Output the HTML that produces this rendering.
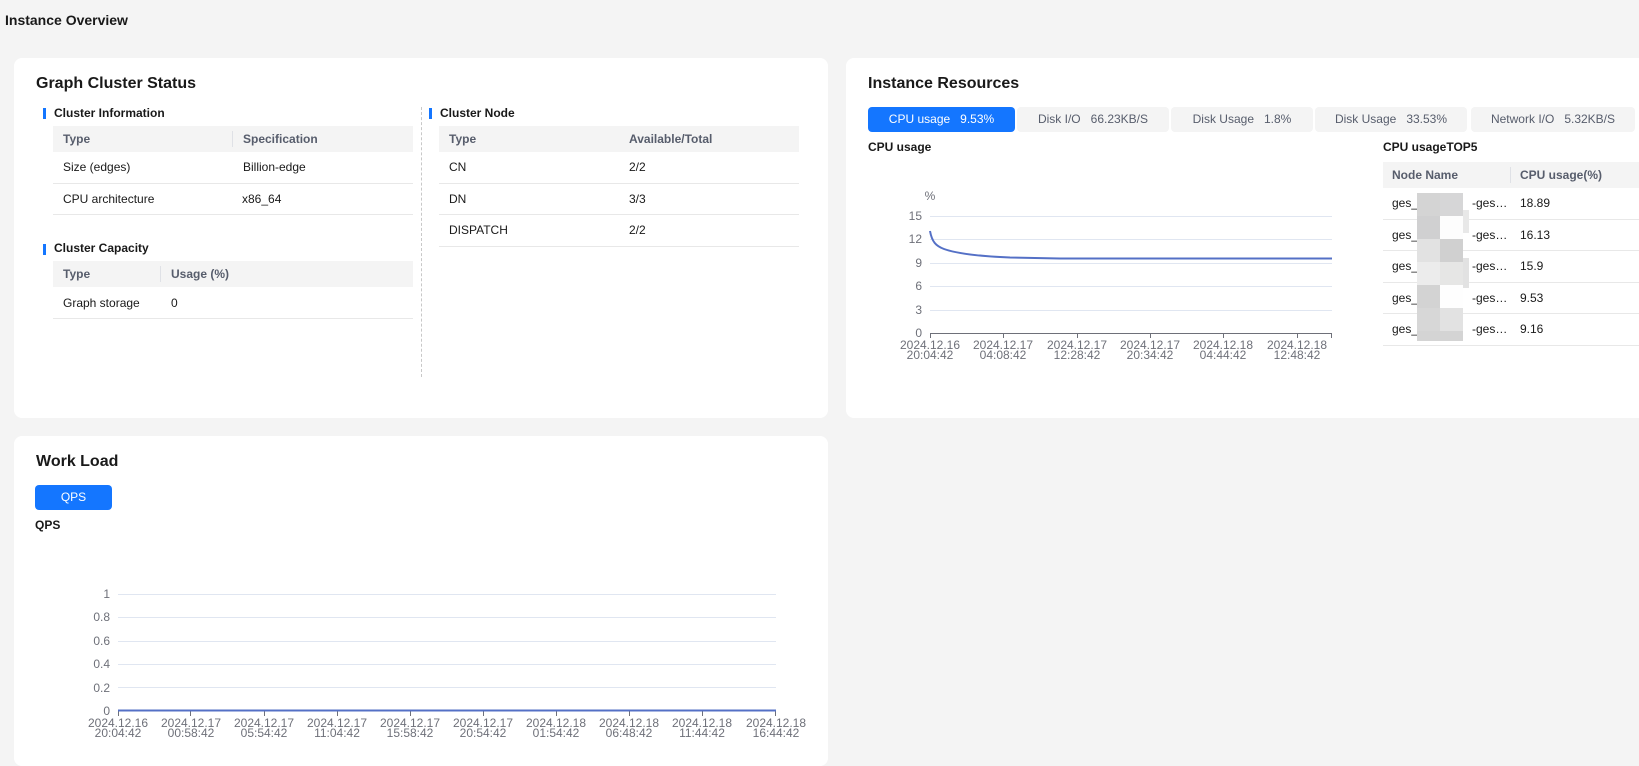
<!DOCTYPE html>
<html><head><meta charset="utf-8"><style>
*{margin:0;padding:0;box-sizing:border-box}
body{width:1639px;height:748px;background:#f4f4f4;font-family:"Liberation Sans",Arial,sans-serif;color:#191919;position:relative;overflow:hidden;font-size:12px}
.a{position:absolute;white-space:nowrap}
.card{position:absolute;background:#fff;border-radius:8px}
.h1{font-size:16px;font-weight:bold;line-height:20px}
.h2{font-size:12px;font-weight:bold;line-height:14px}
.bar{position:absolute;width:3px;height:11px;background:#1476ff}
.th{position:absolute;background:#f4f4f4;height:26px}
.th span{position:absolute;top:6px;color:#575d6c;font-weight:bold;line-height:14px}
.sep{position:absolute;width:1px;height:16px;top:5px;background:#dfe1e6}
.ln{position:absolute;height:1px;background:#e8e8e8}
.t{position:absolute;line-height:14px;white-space:nowrap}
.tab{position:absolute;top:107px;height:25px;background:#f4f4f4;border-radius:4px;text-align:center;line-height:25px;color:#575d6c}
svg text{font-family:"Liberation Sans",Arial,sans-serif;font-size:12px;fill:#6e7079}
</style></head><body>
<div class="a" style="left:5px;top:11px;font-size:14px;font-weight:bold;line-height:18px">Instance Overview</div>

<div class="card" style="left:14px;top:58px;width:814px;height:360px"></div>
<div class="card" style="left:846px;top:58px;width:800px;height:360px"></div>
<div class="card" style="left:14px;top:436px;width:814px;height:330px"></div>

<!-- Graph Cluster Status -->
<div class="a h1" style="left:36px;top:74px">Graph Cluster Status</div>
<div class="bar" style="left:43px;top:108px"></div>
<div class="a h2" style="left:54px;top:106px">Cluster Information</div>
<div class="th" style="left:53px;top:126px;width:360px"><span style="left:10px">Type</span><div class="sep" style="left:179px"></div><span style="left:190px">Specification</span></div>
<div class="t" style="left:63px;top:160px">Size (edges)</div><div class="t" style="left:243px;top:160px">Billion-edge</div>
<div class="ln" style="left:53px;top:183px;width:360px"></div>
<div class="t" style="left:63px;top:192px">CPU architecture</div><div class="t" style="left:242px;top:192px">x86_64</div>
<div class="ln" style="left:53px;top:214px;width:360px"></div>

<div class="bar" style="left:43px;top:244px"></div>
<div class="a h2" style="left:54px;top:241px">Cluster Capacity</div>
<div class="th" style="left:53px;top:261px;width:360px"><span style="left:10px">Type</span><div class="sep" style="left:107px"></div><span style="left:118px">Usage (%)</span></div>
<div class="t" style="left:63px;top:296px">Graph storage</div><div class="t" style="left:171px;top:296px">0</div>
<div class="ln" style="left:53px;top:318px;width:360px"></div>

<div class="a" style="left:421px;top:107px;height:270px;border-left:1px dashed #c8c8c8"></div>

<div class="bar" style="left:429px;top:108px"></div>
<div class="a h2" style="left:440px;top:106px">Cluster Node</div>
<div class="th" style="left:439px;top:126px;width:360px"><span style="left:10px">Type</span><span style="left:190px">Available/Total</span></div>
<div class="t" style="left:449px;top:160px">CN</div><div class="t" style="left:629px;top:160px">2/2</div>
<div class="ln" style="left:439px;top:183px;width:360px"></div>
<div class="t" style="left:449px;top:192px">DN</div><div class="t" style="left:629px;top:192px">3/3</div>
<div class="ln" style="left:439px;top:214px;width:360px"></div>
<div class="t" style="left:449px;top:223px">DISPATCH</div><div class="t" style="left:629px;top:223px">2/2</div>
<div class="ln" style="left:439px;top:246px;width:360px"></div>

<!-- Instance Resources -->
<div class="a h1" style="left:868px;top:74px">Instance Resources</div>
<div class="tab" style="left:868px;width:147px;background:#1476ff;color:#fff">CPU usage&nbsp;&nbsp;&nbsp;9.53%</div>
<div class="tab" style="left:1017px;width:152px">Disk I/O&nbsp;&nbsp;&nbsp;66.23KB/S</div>
<div class="tab" style="left:1171px;width:142px">Disk Usage&nbsp;&nbsp;&nbsp;1.8%</div>
<div class="tab" style="left:1315px;width:152px">Disk Usage&nbsp;&nbsp;&nbsp;33.53%</div>
<div class="tab" style="left:1471px;width:164px">Network I/O&nbsp;&nbsp;&nbsp;5.32KB/S</div>
<div class="a h2" style="left:868px;top:140px">CPU usage</div>
<div class="a h2" style="left:1383px;top:140px">CPU usageTOP5</div>

<svg class="a" style="left:0;top:0" width="1639" height="748">
 <g stroke="#e0e6f1" stroke-width="1">
  <line x1="930" y1="216.5" x2="1332" y2="216.5"/><line x1="930" y1="239.5" x2="1332" y2="239.5"/>
  <line x1="930" y1="263.5" x2="1332" y2="263.5"/><line x1="930" y1="286.5" x2="1332" y2="286.5"/>
  <line x1="930" y1="310.5" x2="1332" y2="310.5"/>
 </g>
 <g stroke="#6e7079" stroke-width="1">
  <line x1="930" y1="333.5" x2="1332" y2="333.5"/>
  <line x1="930.5" y1="333" x2="930.5" y2="338"/><line x1="1003.5" y1="333" x2="1003.5" y2="338"/>
  <line x1="1077.5" y1="333" x2="1077.5" y2="338"/><line x1="1150.5" y1="333" x2="1150.5" y2="338"/>
  <line x1="1223.5" y1="333" x2="1223.5" y2="338"/><line x1="1297.5" y1="333" x2="1297.5" y2="338"/>
  <line x1="1331.5" y1="333" x2="1331.5" y2="338"/>
 </g>
 <path d="M930 231 C932 242 936 246 944 249 C955 253 975 256 1010 257.5 L1060 258.5 L1332 258.5" fill="none" stroke="#5470c6" stroke-width="2"/>
 <text x="930" y="200" text-anchor="middle">%</text>
 <g text-anchor="end"><text x="922" y="220">15</text><text x="922" y="243">12</text><text x="922" y="267">9</text><text x="922" y="290">6</text><text x="922" y="314">3</text><text x="922" y="337">0</text></g>
 <g text-anchor="middle">
  <text x="930" y="349">2024.12.16</text><text x="930" y="359">20:04:42</text>
  <text x="1003" y="349">2024.12.17</text><text x="1003" y="359">04:08:42</text>
  <text x="1077" y="349">2024.12.17</text><text x="1077" y="359">12:28:42</text>
  <text x="1150" y="349">2024.12.17</text><text x="1150" y="359">20:34:42</text>
  <text x="1223" y="349">2024.12.18</text><text x="1223" y="359">04:44:42</text>
  <text x="1297" y="349">2024.12.18</text><text x="1297" y="359">12:48:42</text>
 </g>

 <!-- workload -->
 <g stroke="#e0e6f1" stroke-width="1">
  <line x1="118" y1="594.5" x2="776" y2="594.5"/><line x1="118" y1="617.5" x2="776" y2="617.5"/>
  <line x1="118" y1="641.5" x2="776" y2="641.5"/><line x1="118" y1="664.5" x2="776" y2="664.5"/>
  <line x1="118" y1="687.5" x2="776" y2="687.5"/>
 </g>
 <g stroke="#6e7079" stroke-width="1">
  <line x1="118.5" y1="711" x2="118.5" y2="716"/><line x1="190.5" y1="711" x2="190.5" y2="716"/>
  <line x1="264.5" y1="711" x2="264.5" y2="716"/><line x1="337.5" y1="711" x2="337.5" y2="716"/>
  <line x1="410.5" y1="711" x2="410.5" y2="716"/><line x1="483.5" y1="711" x2="483.5" y2="716"/>
  <line x1="556.5" y1="711" x2="556.5" y2="716"/><line x1="629.5" y1="711" x2="629.5" y2="716"/>
  <line x1="702.5" y1="711" x2="702.5" y2="716"/><line x1="775.5" y1="711" x2="775.5" y2="716"/>
 </g>
 <line x1="118" y1="710.5" x2="776" y2="710.5" stroke="#5470c6" stroke-width="2"/>
 <g text-anchor="end"><text x="110" y="598">1</text><text x="110" y="621">0.8</text><text x="110" y="645">0.6</text><text x="110" y="668">0.4</text><text x="110" y="692">0.2</text><text x="110" y="715">0</text></g>
 <g text-anchor="middle">
  <text x="118" y="727">2024.12.16</text><text x="118" y="737">20:04:42</text>
  <text x="191" y="727">2024.12.17</text><text x="191" y="737">00:58:42</text>
  <text x="264" y="727">2024.12.17</text><text x="264" y="737">05:54:42</text>
  <text x="337" y="727">2024.12.17</text><text x="337" y="737">11:04:42</text>
  <text x="410" y="727">2024.12.17</text><text x="410" y="737">15:58:42</text>
  <text x="483" y="727">2024.12.17</text><text x="483" y="737">20:54:42</text>
  <text x="556" y="727">2024.12.18</text><text x="556" y="737">01:54:42</text>
  <text x="629" y="727">2024.12.18</text><text x="629" y="737">06:48:42</text>
  <text x="702" y="727">2024.12.18</text><text x="702" y="737">11:44:42</text>
  <text x="776" y="727">2024.12.18</text><text x="776" y="737">16:44:42</text>
 </g>
</svg>

<!-- TOP5 table -->
<div class="th" style="left:1383px;top:162px;width:256px"><span style="left:9px">Node Name</span><div class="sep" style="left:127px"></div><span style="left:137px">CPU usage(%)</span></div>
<div class="t" style="left:1392px;top:196px">ges_</div><div class="t" style="left:1472px;top:196px">-ges…</div><div class="t" style="left:1520px;top:196px">18.89</div>
<div class="ln" style="left:1383px;top:219px;width:256px"></div>
<div class="t" style="left:1392px;top:228px">ges_</div><div class="t" style="left:1472px;top:228px">-ges…</div><div class="t" style="left:1520px;top:228px">16.13</div>
<div class="ln" style="left:1383px;top:250px;width:256px"></div>
<div class="t" style="left:1392px;top:259px">ges_</div><div class="t" style="left:1472px;top:259px">-ges…</div><div class="t" style="left:1520px;top:259px">15.9</div>
<div class="ln" style="left:1383px;top:282px;width:256px"></div>
<div class="t" style="left:1392px;top:291px">ges_</div><div class="t" style="left:1472px;top:291px">-ges…</div><div class="t" style="left:1520px;top:291px">9.53</div>
<div class="ln" style="left:1383px;top:313px;width:256px"></div>
<div class="t" style="left:1392px;top:322px">ges_</div><div class="t" style="left:1472px;top:322px">-ges…</div><div class="t" style="left:1520px;top:322px">9.16</div>
<div class="ln" style="left:1383px;top:345px;width:256px"></div>
<!-- blur mosaic -->
<div class="a" style="left:1417px;top:193px;width:23px;height:23px;background:#d4d4d4"></div>
<div class="a" style="left:1440px;top:193px;width:23px;height:23px;background:#d6d6d7"></div>
<div class="a" style="left:1417px;top:216px;width:23px;height:23px;background:#d0d0d1"></div>
<div class="a" style="left:1440px;top:216px;width:23px;height:23px;background:#fdfdfd"></div>
<div class="a" style="left:1463px;top:210px;width:6px;height:23px;background:#e8e8e8"></div>
<div class="a" style="left:1417px;top:239px;width:23px;height:23px;background:#e2e2e2"></div>
<div class="a" style="left:1440px;top:239px;width:23px;height:23px;background:#d0d0d0"></div>
<div class="a" style="left:1417px;top:262px;width:23px;height:23px;background:#ececec"></div>
<div class="a" style="left:1440px;top:262px;width:23px;height:23px;background:#e6e6e5"></div>
<div class="a" style="left:1463px;top:258px;width:6px;height:30px;background:#e2e2e2"></div>
<div class="a" style="left:1417px;top:285px;width:23px;height:23px;background:#d3d3d3"></div>
<div class="a" style="left:1440px;top:285px;width:23px;height:23px;background:#fefefe"></div>
<div class="a" style="left:1417px;top:308px;width:23px;height:23px;background:#d7d7d7"></div>
<div class="a" style="left:1440px;top:308px;width:23px;height:23px;background:#e2e2e2"></div>
<div class="a" style="left:1417px;top:331px;width:46px;height:10px;background:#d4d4d4"></div>

<!-- Work Load -->
<div class="a h1" style="left:36px;top:452px">Work Load</div>
<div class="a" style="left:35px;top:485px;width:77px;height:25px;background:#1476ff;border-radius:4px;color:#fff;text-align:center;line-height:25px">QPS</div>
<div class="a h2" style="left:35px;top:518px">QPS</div>
</body></html>
